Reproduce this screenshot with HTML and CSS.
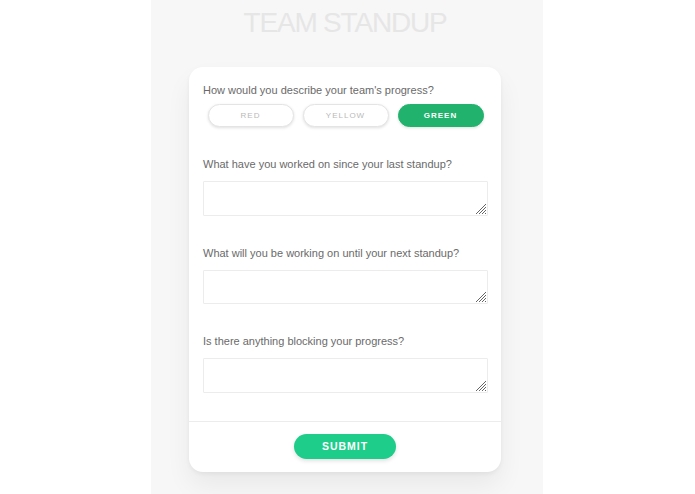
FILE: index.html
```html
<!DOCTYPE html>
<html>
<head>
<meta charset="utf-8">
<link rel="stylesheet" href="styles.css">
</head>
<body>
<div class="column">
  <h1 class="title">TEAM STANDUP</h1>
  <form class="card">
    <div class="body">
      <div class="question">How would you describe your team's progress?</div>
      <div class="choices">
        <button type="button" class="choice">RED</button>
        <button type="button" class="choice">YELLOW</button>
        <button type="button" class="choice active">GREEN</button>
      </div>
      <label class="question q-gap">What have you worked on since your last standup?</label>
      <textarea class="answer"></textarea>
      <label class="question q-gap">What will you be working on until your next standup?</label>
      <textarea class="answer"></textarea>
      <label class="question q-gap">Is there anything blocking your progress?</label>
      <textarea class="answer"></textarea>
    </div>
    <div class="footer">
      <button type="button" class="submit">SUBMIT</button>
    </div>
  </form>
</div>
</body>
</html>
```

FILE: styles.css
```css
html, body {
  margin: 0;
  padding: 0;
  background: #ffffff;
  font-family: "Liberation Sans", Arial, sans-serif;
}
.column {
  width: 392px;
  margin: 0 0 0 151px;
  min-height: 494px;
  background: #f7f7f7;
  padding: 6px 0 0;
  box-sizing: border-box;
  overflow: hidden;
}
.title {
  margin: 0;
  padding-right: 4px;
  text-align: center;
  font-weight: normal;
  font-size: 28px;
  line-height: 34px;
  letter-spacing: -1.2px;
  color: #e6e6e6;
}
.card {
  width: 312px;
  margin: 27px 0 0 38px;
  background: #fff;
  border-radius: 14px;
  box-shadow: 0 2px 4px rgba(0,0,0,0.05), 0 14px 26px rgba(0,0,0,0.06);
  display: flex;
  flex-direction: column;
}
.body {
  padding: 16px 13px 28px 14px;
  display: flex;
  flex-direction: column;
}
.question {
  display: block;
  font-size: 11px;
  line-height: 14px;
  color: #6a6a6a;
}
.q-gap {
  margin-top: 30px;
}
.choices {
  display: flex;
  justify-content: center;
  gap: 9px;
  margin-top: 7px;
}
.choice {
  width: 86px;
  height: 23px;
  border-radius: 12px;
  border: 1px solid #e4e4e4;
  background: #fff;
  box-shadow: 0 1px 3px rgba(0,0,0,0.12);
  font-family: "Liberation Sans", Arial, sans-serif;
  font-size: 8px;
  letter-spacing: 1px;
  color: #b9b9b9;
  padding: 0;
  box-sizing: border-box;
}
.choice.active {
  background: #21b36d;
  border-color: #21b36d;
  color: #fff;
  font-weight: bold;
}
.answer {
  display: block;
  margin-top: 10px;
  width: 285px;
  height: 34.6px;
  box-sizing: border-box;
  border: 1px solid #ececec;
  border-radius: 1px;
  resize: none;
  background-color: #fff;
  background-image: url("data:image/svg+xml;utf8,<svg xmlns='http://www.w3.org/2000/svg' width='11' height='11'><g stroke='%23666' stroke-width='1'><line x1='11' y1='1' x2='1' y2='11'/><line x1='11' y1='4' x2='4' y2='11'/><line x1='11' y1='7' x2='7' y2='11'/><line x1='11' y1='10' x2='10' y2='11'/></g></svg>");
  background-repeat: no-repeat;
  background-position: right 1px bottom 1px;
  font-family: "Liberation Sans", Arial, sans-serif;
}
.footer {
  border-top: 1px solid #ececec;
  display: flex;
  justify-content: center;
  padding: 12px 0 13px;
}
.submit {
  width: 102px;
  height: 25px;
  border: none;
  border-radius: 13px;
  background: #1ecd89;
  color: #fff;
  font-family: "Liberation Sans", Arial, sans-serif;
  font-weight: bold;
  font-size: 10.5px;
  letter-spacing: 1px;
  box-shadow: 0 2px 4px rgba(0,0,0,0.12);
  padding: 0;
}
```
